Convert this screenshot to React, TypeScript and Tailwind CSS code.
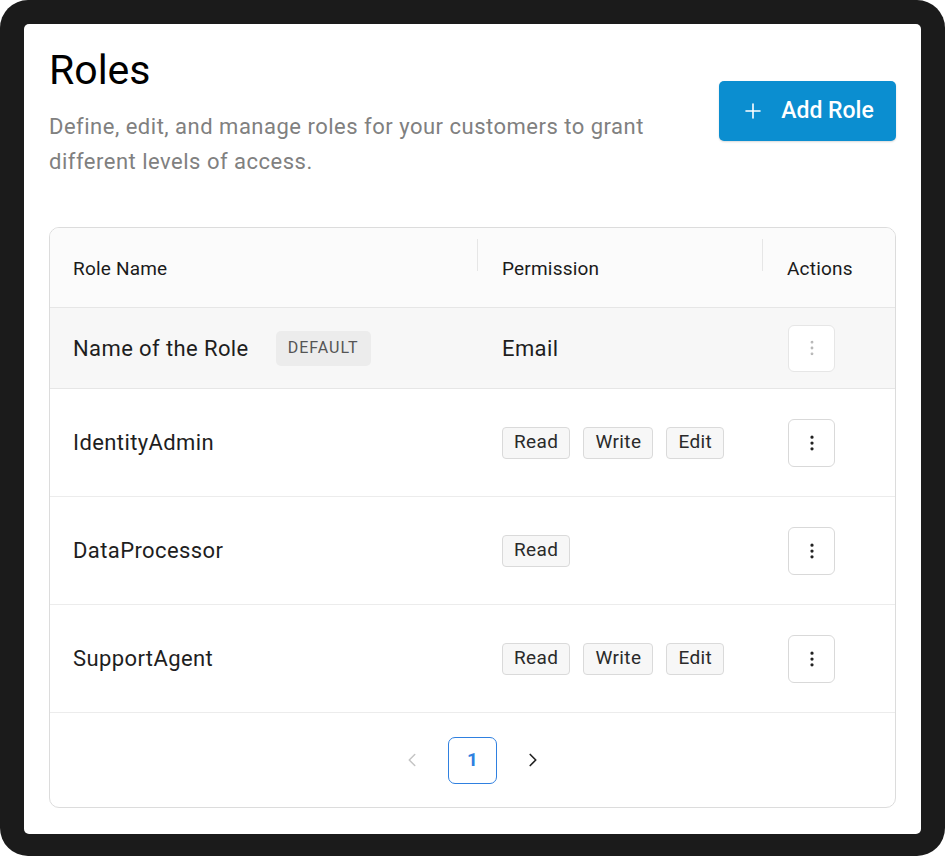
import { Plus, EllipsisVertical, ChevronLeft, ChevronRight } from 'lucide-react';

interface RoleRow {
  name: string;
  isDefault?: boolean;
  email?: boolean;
  permissions: string[];
}

const rows: RoleRow[] = [
  { name: 'Name of the Role', isDefault: true, email: true, permissions: [] },
  { name: 'IdentityAdmin', permissions: ['Read', 'Write', 'Edit'] },
  { name: 'DataProcessor', permissions: ['Read'] },
  { name: 'SupportAgent', permissions: ['Read', 'Write', 'Edit'] },
];

const font = { fontFamily: 'Roboto, "Noto Sans", sans-serif' };

function ActionButton({ disabled }: { disabled?: boolean }) {
  return (
    <button
      className={
        disabled
          ? 'w-[47px] h-[47px] rounded-md border border-[#e6e6e6] bg-white flex items-center justify-center text-[#b5b5b5]'
          : 'w-[47px] h-[48px] rounded-md border border-[#d9d9d9] bg-white flex items-center justify-center text-[#222]'
      }
    >
      <EllipsisVertical size={20} strokeWidth={disabled ? 1.4 : 1.9} />
    </button>
  );
}

export default function App() {
  return (
    <div className="w-[945px] h-[856px] bg-white" style={font}>
      <div className="h-full rounded-[28px] bg-[#1b1b1b] pt-6 pl-6 pr-6 pb-[22px]">
        <div className="h-full bg-white rounded-[5px] px-[25px] pt-[22px]">
          {/* header */}
          <div className="flex items-start justify-between">
            <div>
              <h1 className="text-[41px] leading-[48px] text-black font-normal">Roles</h1>
              <p className="mt-[15px] text-[22px] leading-[35px] text-[#808080] tracking-[0.5px] w-[640px]">
                Define, edit, and manage roles for your customers to grant different levels of access.
              </p>
            </div>
            <button className="mt-[35px] w-[177px] h-[60px] rounded-[5px] bg-[#0b8ed0] text-white flex items-center justify-center gap-[16px] text-[23px] font-medium shadow-[0_1px_2px_rgba(0,0,0,0.15)]">
              <Plus size={24} strokeWidth={1.6} />
              <span>Add Role</span>
            </button>
          </div>

          {/* table */}
          <div className="mt-[48px] border border-[#dcdcdc] rounded-[10px] overflow-hidden">
            <div className="grid grid-cols-[428px_285px_1fr] h-[80px] pt-[3px] bg-[#fbfbfb] border-b border-[#e6e6e6] items-center text-[19px] text-[#1a1a1a] tracking-[0.2px]">
              <div className="pl-[23px] relative">
                Role Name
                <span className="absolute right-0 top-[-16px] h-[32px] w-px bg-[#e6e6e6]" />
              </div>
              <div className="pl-[24px] relative">
                Permission
                <span className="absolute right-0 top-[-16px] h-[32px] w-px bg-[#e6e6e6]" />
              </div>
              <div className="pl-[24px]">Actions</div>
            </div>

            {rows.map((r, i) => (
              <div
                key={i}
                className={
                  r.isDefault
                    ? 'grid grid-cols-[428px_285px_1fr] h-[81px] bg-[#f7f7f7] border-b border-[#e6e6e6] items-center'
                    : 'grid grid-cols-[428px_285px_1fr] h-[108px] bg-white border-b border-[#ececec] items-center'
                }
              >
                <div className="pl-[23px] flex items-center gap-[27px] text-[22px] text-[#1e1e1e] tracking-[0.4px]">
                  <span>{r.name}</span>
                  {r.isDefault && (
                    <span className="h-[35px] px-[12px] rounded-[5px] bg-[#ececec] text-[#555] text-[16px] tracking-[1px] flex items-center">
                      DEFAULT
                    </span>
                  )}
                </div>
                <div className="pl-[24px] flex items-center gap-[13px]">
                  {r.email && <span className="text-[22px] text-[#1e1e1e] tracking-[0.4px]">Email</span>}
                  {r.permissions.map((p) => (
                    <span
                      key={p}
                      className="h-[32px] px-[11px] rounded-[4px] border border-[#dadada] bg-[#f7f7f7] text-[19px] text-[#2a2a2a] tracking-[0.4px] flex items-center"
                    >
                      {p}
                    </span>
                  ))}
                </div>
                <div className="pl-[25px]">
                  <ActionButton disabled={r.isDefault} />
                </div>
              </div>
            ))}

            {/* pagination */}
            <div className="h-[94px] flex items-center justify-center gap-[18px]">
              <button className="w-[36px] h-[36px] flex items-center justify-center text-[#c4c4c4]">
                <ChevronLeft size={22} strokeWidth={1.6} />
              </button>
              <button className="w-[49px] h-[47px] rounded-[7px] border-[1.5px] border-[#2f80e0] text-[#2f80e0] text-[19px] font-bold flex items-center justify-center">
                1
              </button>
              <button className="w-[36px] h-[36px] flex items-center justify-center text-[#222]">
                <ChevronRight size={22} strokeWidth={1.8} />
              </button>
            </div>
          </div>
        </div>
      </div>
    </div>
  );
}
